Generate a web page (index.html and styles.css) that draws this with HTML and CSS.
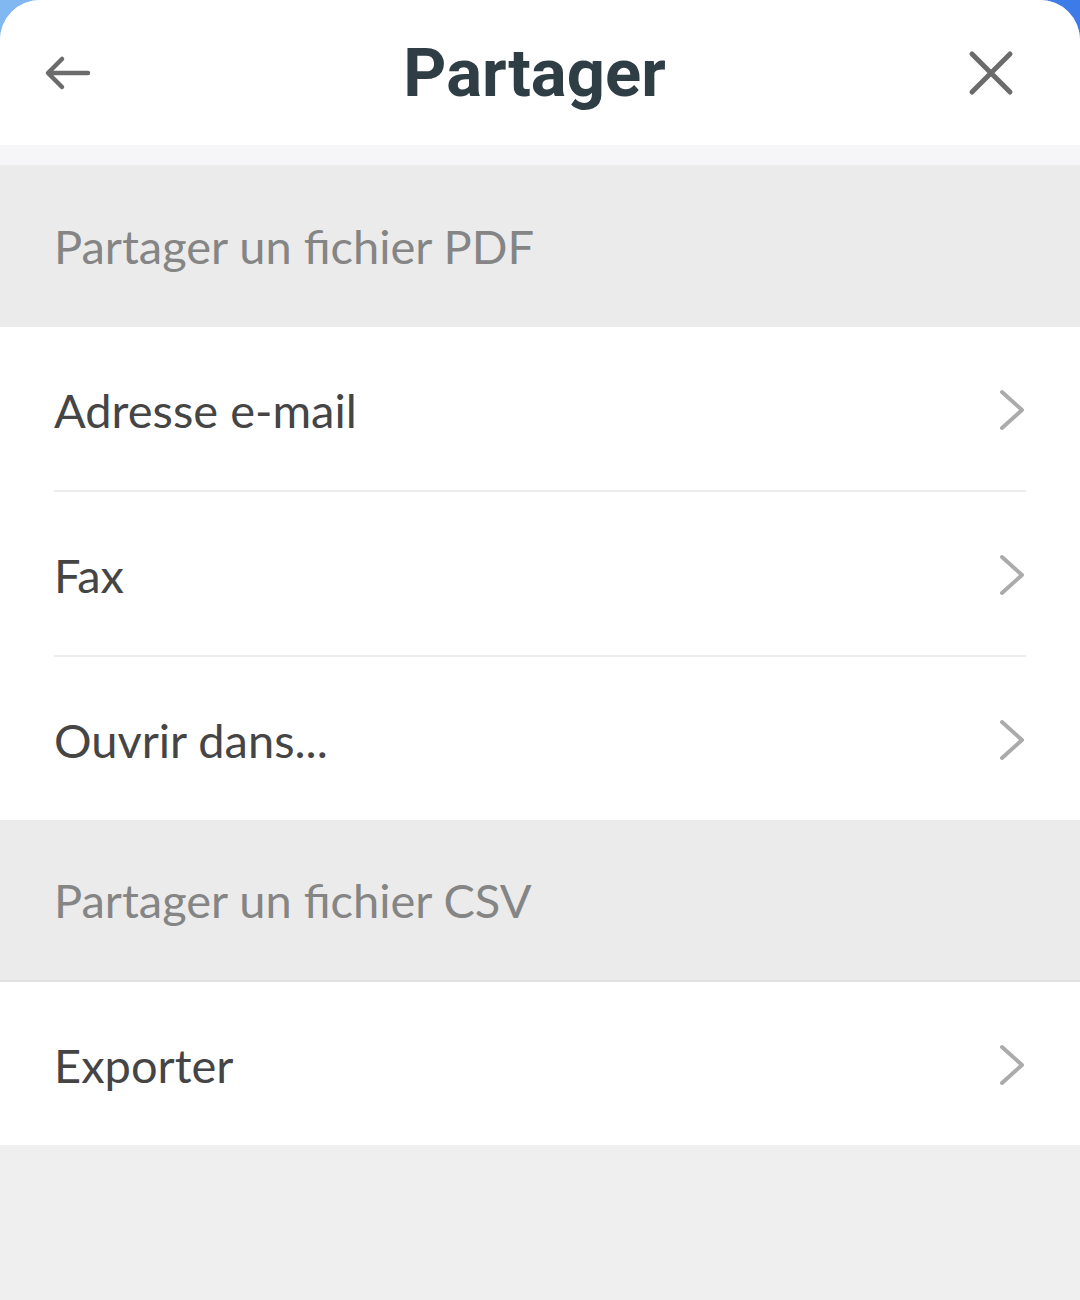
FILE: index.html
```html
<!DOCTYPE html>
<html lang="fr">
<head>
<meta charset="utf-8">
<link rel="stylesheet" href="styles.css">
</head>
<body>
<div class="sheet">
  <header class="topbar">
    <button class="icon-btn" aria-label="Retour">
      <svg width="48" height="48" viewBox="0 0 48 48"><path d="M44 24H5M18 10L4 24l14 14" fill="none" stroke="#6b6b6b" stroke-width="4.5" stroke-linecap="round" stroke-linejoin="round"/></svg>
    </button>
    <h1 class="title">Partager</h1>
    <button class="icon-btn" aria-label="Fermer">
      <svg width="48" height="48" viewBox="0 0 48 48"><path d="M5 5l38 38M43 5L5 43" fill="none" stroke="#6b6b6b" stroke-width="5" stroke-linecap="round"/></svg>
    </button>
  </header>
  <div class="strip"></div>
  <div class="section-head">Partager un fichier PDF</div>
  <ul class="list">
    <li class="row"><span>Adresse e-mail</span><svg class="chev" width="28" height="42" viewBox="0 0 28 42"><path d="M4 3l20 18L4 39" fill="none" stroke="#ababab" stroke-width="4" stroke-linecap="round" stroke-linejoin="round"/></svg></li>
    <li class="row"><span>Fax</span><svg class="chev" width="28" height="42" viewBox="0 0 28 42"><path d="M4 3l20 18L4 39" fill="none" stroke="#ababab" stroke-width="4" stroke-linecap="round" stroke-linejoin="round"/></svg></li>
    <li class="row"><span>Ouvrir dans...</span><svg class="chev" width="28" height="42" viewBox="0 0 28 42"><path d="M4 3l20 18L4 39" fill="none" stroke="#ababab" stroke-width="4" stroke-linecap="round" stroke-linejoin="round"/></svg></li>
  </ul>
  <div class="section-head last">Partager un fichier CSV</div>
  <ul class="list">
    <li class="row"><span>Exporter</span><svg class="chev" width="28" height="42" viewBox="0 0 28 42"><path d="M4 3l20 18L4 39" fill="none" stroke="#ababab" stroke-width="4" stroke-linecap="round" stroke-linejoin="round"/></svg></li>
  </ul>
  <div class="filler"></div>
</div>
</body>
</html>
```
FILE: styles.css
```css
* { box-sizing: border-box; }
html, body { margin: 0; padding: 0; height: 100%; }
body {
  background: linear-gradient(90deg, #82b8f2 0%, #5a95ec 50%, #3d7ce8 100%);
  font-family: "Lato", "Noto Sans", sans-serif;
}
.sheet {
  background: #efefef;
  border-radius: 40px 40px 0 0;
  overflow: hidden;
  min-height: 1300px;
  display: flex;
  flex-direction: column;
}
.topbar {
  height: 145px;
  background: #ffffff;
  display: flex;
  align-items: center;
  padding: 0 65px 0 44px;
}
.icon-btn {
  background: none;
  border: 0;
  padding: 0;
  width: 48px;
  height: 48px;
  display: flex;
  flex: none;
}
.title {
  flex: 1;
  margin: 0;
  padding-left: 10px;
  text-align: center;
  font-family: "Roboto", sans-serif;
  font-weight: 700;
  font-size: 67px;
  color: #2f3d45;
}
.strip {
  height: 20px;
  background: #f6f6f9;
}
.section-head {
  height: 162px;
  background: #ebebeb;
  display: flex;
  align-items: center;
  padding-left: 54px;
  font-size: 47px;
  color: #858585;
}
.section-head.last {
  border-bottom: 2px solid #e2e2e2;
}
.list {
  list-style: none;
  margin: 0;
  padding: 0 54px;
  background: #ffffff;
}
.row {
  height: 165px;
  display: flex;
  align-items: center;
  justify-content: space-between;
  padding-top: 2px;
  font-size: 47px;
  color: #454545;
  border-bottom: 2px solid #ededed;
}
.row:last-child { border-bottom: 0; height: 163px; }
.filler { flex: 1; background: #efefef; }
```
